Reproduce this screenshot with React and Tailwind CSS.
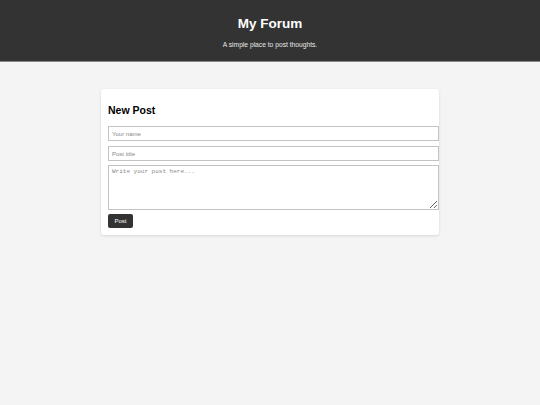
export default function App() {
  return (
    <div className="min-h-[405px] bg-[#f4f4f4] font-['Liberation_Sans',Arial,sans-serif]">
      {/* header */}
      <header className="h-[62px] bg-[#333333] border-b border-[#888] text-white text-center pt-[16px]">
        <h1 className="text-[13.5px] leading-[16px] font-bold">My Forum</h1>
        <p className="mt-[9px] text-[6.7px] leading-[8px] text-[#e8e8e8]">A simple place to post thoughts.</p>
      </header>

      <main className="pt-[27px]">
        <div className="w-[338px] mx-auto bg-white rounded-[3px] shadow-[0_1px_3px_rgba(0,0,0,0.12)] px-[7px] pt-[7px] pb-[7px]">
          <h2 className="mt-[8px] mb-[9px] text-[10.5px] leading-[13px] font-bold text-black">New Post</h2>
          <div className="flex flex-col">
            <input
              placeholder="Your name"
              className="w-[331px] h-[15px] border border-[#c4c4c4] px-[3px] text-[6px] placeholder:text-[#888] outline-none"
            />
            <input
              placeholder="Post title"
              className="mt-[5px] w-[331px] h-[15px] border border-[#c4c4c4] px-[3px] text-[6px] placeholder:text-[#888] outline-none"
            />
            <textarea
              placeholder="Write your post here..."
              className="mt-[4px] w-[331px] h-[45px] border border-[#c4c4c4] px-[3px] py-[2px] text-[6px] leading-[8px] font-['Liberation_Mono',monospace] placeholder:text-[#888] outline-none resize-y"
            />
            <button className="mt-[4px] w-[25px] h-[14px] bg-[#333333] text-white text-[6px] rounded-[2px]">
              Post
            </button>
          </div>
        </div>
      </main>
    </div>
  );
}
